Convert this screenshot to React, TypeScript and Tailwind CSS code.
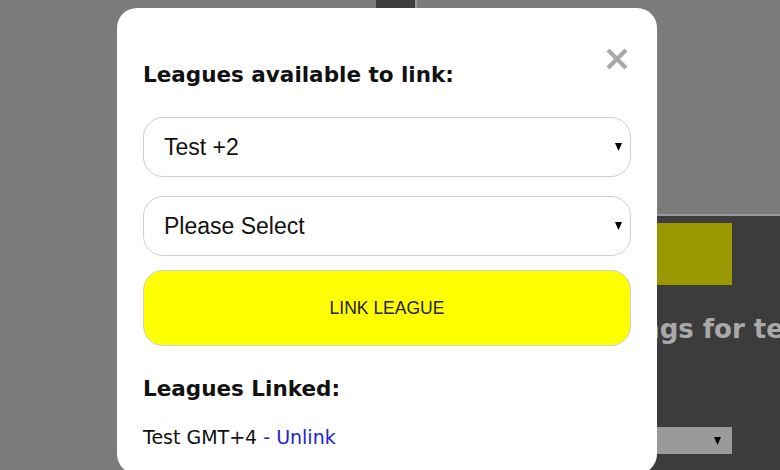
import * as React from "react";

const heading = "font-['DejaVu_Sans',sans-serif] font-bold text-[21.5px] leading-[26px] text-[#111]";

const Caret = ({ className }: { className?: string }) => (
  <svg width="7" height="8" viewBox="0 0 7 8" className={className}>
    <polygon points="0,0 7,0 3.5,8" fill="currentColor" />
  </svg>
);

interface FakeSelectProps {
  value: string;
  className?: string;
}

const FakeSelect = ({ value, className }: FakeSelectProps) => (
  <div
    className={
      "flex h-[60px] items-center justify-between rounded-[20px] border border-[#cfcfcf] bg-white pl-5 pr-[8px] " +
      (className ?? "")
    }
  >
    <span className="font-['Liberation_Sans',Arial,sans-serif] text-[23px] text-[#111]">{value}</span>
    <Caret className="text-black" />
  </div>
);

const CloseIcon = () => (
  <svg width="22" height="22" viewBox="0 0 22 22">
    <path d="M2 2 L20 20 M20 2 L2 20" stroke="#a8a8a8" strokeWidth="4.2" strokeLinecap="butt" />
  </svg>
);

export default function App() {
  return (
    <div className="relative h-[470px] w-[780px] overflow-hidden bg-[#7b7b7b]">
      {/* page behind the overlay */}
      <div className="flex h-[214px] items-start">
        <div className="ml-[376px] h-[40px] w-[41px] border-r-2 border-[#9a9a9a] bg-[#3d3d3d]" />
      </div>
      <div className="ml-[523px] h-[256px] overflow-hidden border-t-2 border-[#9a9a9a] bg-[#3c3c3c] px-[48px] pt-[7px]">
        <div className="h-[62px] bg-[#9a9800]" />
        <h2 className="mt-[28px] whitespace-nowrap font-['DejaVu_Sans',sans-serif] text-[26px] font-bold leading-[32px] text-[#a9a9a9]">
          Settings for teams
        </h2>
        <div className="mt-[82px] flex h-[27px] items-center justify-end bg-[#9a9a9a] pr-[11px]">
          <Caret className="text-black" />
        </div>
      </div>

      {/* modal */}
      <div className="absolute left-[117px] top-[8px] h-[466px] w-[540px] rounded-[20px] bg-white px-[26px] pt-[54px]">
        <button className="absolute right-[29px] top-[40px]" aria-label="Close">
          <CloseIcon />
        </button>
        <h3 className={heading}>Leagues available to link:</h3>
        <FakeSelect value="Test +2" className="mt-[29px]" />
        <FakeSelect value="Please Select" className="mt-[19px]" />
        <button className="mt-[14px] flex h-[76px] w-full items-center justify-center rounded-[20px] border border-[#cfcfcf] bg-[#ffff00] font-['Liberation_Sans',Arial,sans-serif] text-[17.5px] text-[#222]">
          LINK LEAGUE
        </button>
        <h3 className={heading + " mt-[30px]"}>Leagues Linked:</h3>
        <p className="mt-[23px] font-['DejaVu_Sans',sans-serif] text-[19px] leading-[24px] text-[#111]">
          Test GMT+4 <span className="text-[#2323cc]">- Unlink</span>
        </p>
      </div>
    </div>
  );
}
